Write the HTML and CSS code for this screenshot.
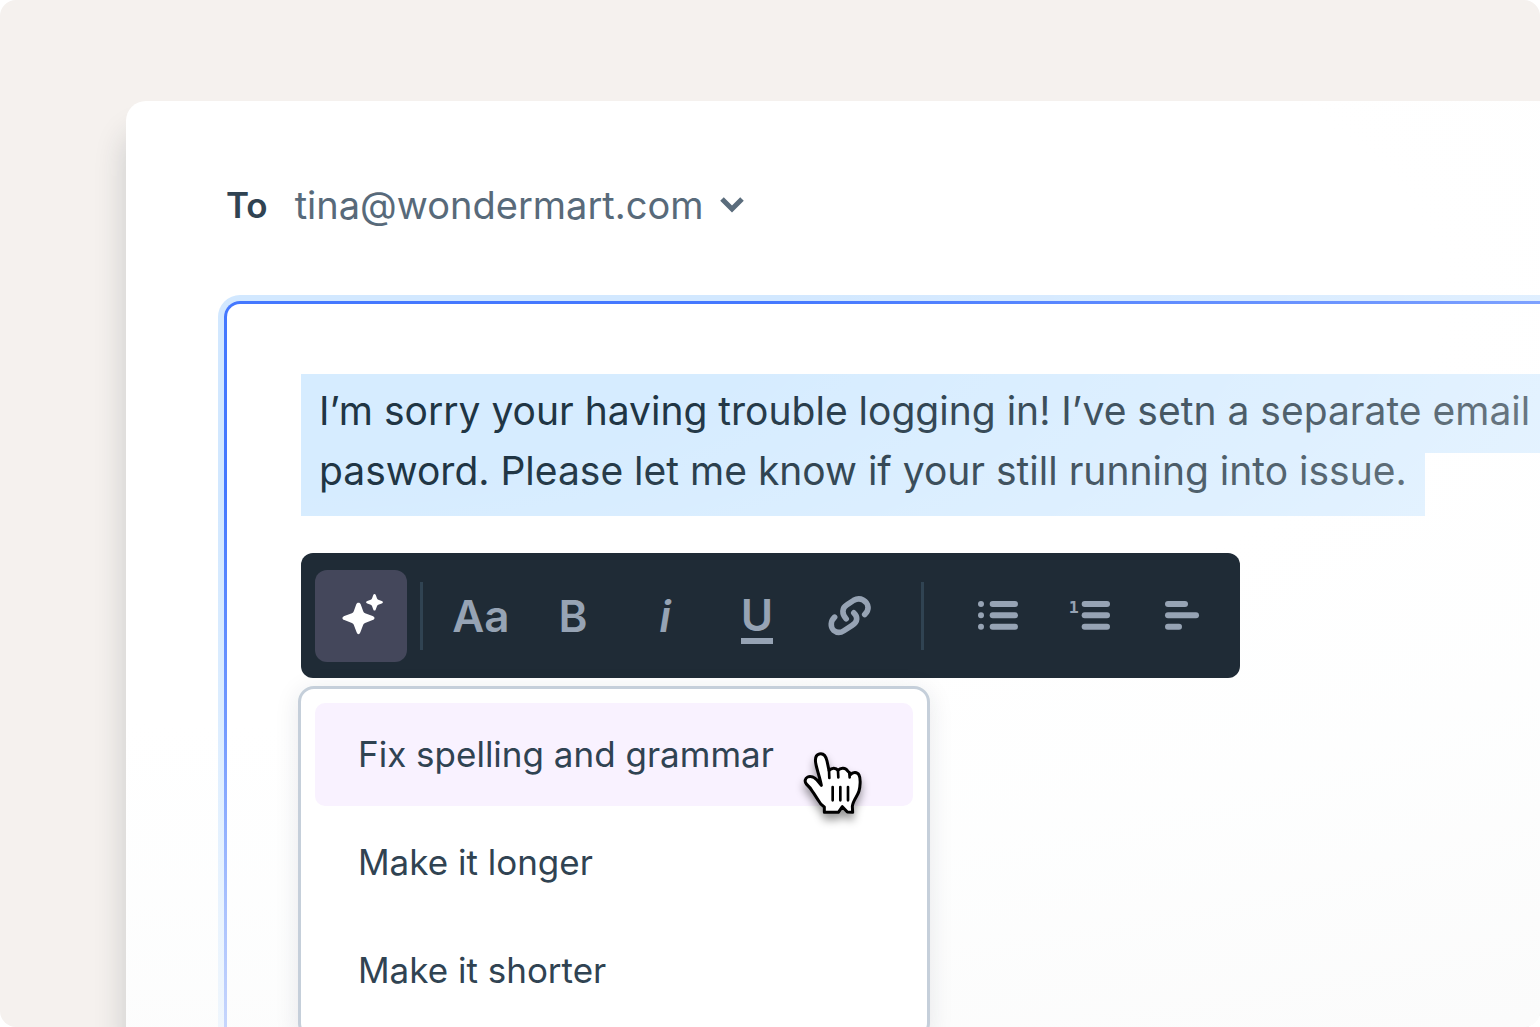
FILE: index.html
```html
<!DOCTYPE html>
<html lang="en">
<head>
    <meta charset="UTF-8">
    <meta name="viewport" content="width=device-width, initial-scale=1.0">
    <title>Reply</title>
    <link rel="stylesheet" href="styles.css">
</head>
<body>
    <main class="stage">
        <section class="composer">
            <div class="recipient">
                <span class="recipient-label" id="to-label">To</span>
                <button class="recipient-button" type="button" aria-labelledby="to-label to-address">
                    <span id="to-address">tina@wondermart.com</span>
                    <svg class="chevron" viewBox="0 0 26 18" aria-hidden="true">
                        <path d="M3 3l10 10L23 3"/>
                    </svg>
                </button>
            </div>

            <div class="editor">
                <div class="message" role="textbox" aria-multiline="true" aria-label="Message" contenteditable="true" spellcheck="false">
                    <mark>I’m sorry your having trouble logging in! I’ve setn a separate email</mark>
                    <mark class="last-line">pasword. Please let me know if your still running into issue.</mark>
                </div>

                <div class="toolbar" role="toolbar" aria-label="Formatting">
                    <button class="tool tool-ai" type="button" aria-label="AI assist">
                        <svg width="44" height="44" viewBox="-10 3 140 140" aria-hidden="true">
                            <path d="M52 31c4 0 6 2 7 5l8 22c1 3 3 5 6 6l24 9c8 3 8 10 0 13l-24 9c-3 1-5 3-6 6l-9 24c-3 8-9 8-12 0l-9-24c-1-3-3-5-6-6l-24-9c-8-3-8-10 0-13l24-9c3-1 5-3 6-6l8-22c1-3 3-5 7-5z"/>
                            <path d="M103 3c2 0 3 1 4 3l4 11c1 2 2 3 4 4l11 4c5 2 5 6 0 8l-11 4c-2 1-3 2-4 4l-4 11c-2 5-6 5-8 0l-4-11c-1-2-2-3-4-4l-11-4c-5-2-5-6 0-8l11-4c2-1 3-2 4-4l4-11c1-2 2-3 4-3z"/>
                        </svg>
                    </button>
                    <span class="divider divider-first"></span>
                    <button class="tool" type="button" aria-label="Text size">Aa</button>
                    <button class="tool" type="button" aria-label="Bold">B</button>
                    <button class="tool tool-italic" type="button" aria-label="Italic">i</button>
                    <button class="tool" type="button" aria-label="Underline"><span class="underlined">U</span></button>
                    <button class="tool" type="button" aria-label="Link">
                        <svg class="link-icon" width="47" height="43" viewBox="0 0 140 130" aria-hidden="true">
                            <path d="M60 75C46 60 47 42 62 33L83 19C102 8 124 20 126 40C127 50 122 56 116 62"/>
                            <path d="M25 70C12 82 12 100 22 110C33 119 44 117 53 111L78 95C96 84 95 68 83 57"/>
                        </svg>
                    </button>
                    <span class="divider"></span>
                    <button class="tool" type="button" aria-label="Bulleted list">
                        <svg width="40" height="29" viewBox="0 0 120 87" aria-hidden="true">
                            <circle cx="9" cy="9" r="9"/>
                            <circle cx="9" cy="43" r="9"/>
                            <circle cx="9" cy="77" r="9"/>
                            <rect x="35" y="0" width="85" height="18" rx="9"/>
                            <rect x="35" y="34" width="85" height="18" rx="9"/>
                            <rect x="35" y="68" width="85" height="18" rx="9"/>
                        </svg>
                    </button>
                    <button class="tool" type="button" aria-label="Numbered list">
                        <svg width="40" height="29" viewBox="0 0 120 87" aria-hidden="true">
                            <text class="list-number" x="-4" y="35">1</text>
                            <rect x="35" y="0" width="85" height="18" rx="9"/>
                            <rect x="35" y="34" width="85" height="18" rx="9"/>
                            <rect x="35" y="68" width="85" height="18" rx="9"/>
                        </svg>
                    </button>
                    <button class="tool" type="button" aria-label="Align left">
                        <svg width="34" height="29" viewBox="0 0 102 87" aria-hidden="true">
                            <rect x="0" y="0" width="69" height="18" rx="9"/>
                            <rect x="0" y="34" width="102" height="18" rx="9"/>
                            <rect x="0" y="68" width="51" height="18" rx="9"/>
                        </svg>
                    </button>

                    <div class="menu">
                        <button class="menu-item active" type="button">Fix spelling and grammar
                            <svg class="cursor" width="60" height="64" viewBox="0 0 180 192" aria-hidden="true">
                                <path class="hand" d="M61 181L61 165C52 159 47 153 43 145L28 122C22 112 15 103 7 96C1 89 3 79 11 75C20 71 32 76 39 84L52 100C48 78 40 57 36 38C32 20 34 9 46 6C59 3 66 14 69 27L75 55C84 46 96 47 102 55C110 46 125 47 131 57C136 60 138 64 139 68C147 59 160 60 165 69C171 80 168 107 165 117C161 132 147 145 145 163L146 181L130 180L115 164L103 181Z"/>
                                <path class="knuckles" d="M75 55L76 78M102 57L103 76M136 62L137 76M86 105V145M109 105V145M132 105V145"/>
                            </svg>
                        </button>
                        <button class="menu-item" type="button">Make it longer</button>
                        <button class="menu-item" type="button">Make it shorter</button>
                    </div>
                </div>
            </div>
        </section>
    </main>
</body>
</html>
```
FILE: styles.css
```css
* {
    box-sizing: border-box;
}

body {
    margin: 0;
    background: #ffffff;
    color: #304352;
    font-family: Inter, "Liberation Sans", sans-serif;
    overflow: hidden;
}

button {
    border: none;
    background: none;
    padding: 0;
    color: inherit;
    font: inherit;
    cursor: pointer;
}

.stage {
    display: flex;
    height: 100vh;
    padding: 101px 0 0 126px;
    border-radius: 16px;
    background: #f5f1ee;
    overflow: hidden;
}

.composer {
    position: relative;
    display: flex;
    flex-direction: column;
    flex: 1;
    min-width: 0;
    padding: 80px 0 0 98px;
    border-radius: 20px 0 0 0;
    background: #ffffff;
    box-shadow: 0 32px 32px rgba(31, 43, 54, 0.2);
}

/* fades the message out towards the bottom right, under the toolbar and menu */
.composer::after {
    content: "";
    position: absolute;
    inset: 0;
    border-radius: inherit;
    background: radial-gradient(ellipse 2690px 940px at 99px 200px, rgba(255, 255, 255, 0) 20%, rgba(255, 255, 255, 0.25) 45%, rgba(252, 253, 253, 0.56) 65%, #fafafa 100%);
    pointer-events: none;
}

.recipient {
    display: flex;
    align-items: center;
    gap: 27px;
    height: 48px;
    padding-left: 2px;
    font-size: 38px;
}

.recipient-label {
    font-size: 35px;
    font-weight: 600;
}

.recipient-button {
    display: flex;
    align-items: center;
    gap: 16px;
    color: #586a7a;
}

.chevron {
    width: 26px;
    height: 18px;
    fill: none;
    stroke: #586a7a;
    stroke-width: 5;
}

.editor {
    flex: 1;
    margin-top: 72px;
    padding: 70px 0 0 74px;
    border: 3px solid #4478ff;
    border-width: 3px 0 0 3px;
    border-radius: 16px 0 0 0;
    box-shadow: 0 0 0 6px #d2e8ff;
}

.message {
    color: #203544;
    font-size: 39px;
    line-height: 60px;
    white-space: nowrap;
    outline: none;
}

.message mark {
    display: block;
    width: fit-content;
    min-width: 100%;
    padding: 7px 18px 12px;
    background: #d6ecff;
    color: inherit;
}

.message .last-line {
    min-width: 0;
    padding: 0 18px 27px;
    line-height: 36px;
}

.toolbar {
    position: relative;
    z-index: 2;
    display: flex;
    align-items: center;
    width: fit-content;
    height: 125px;
    margin-top: 37px;
    padding: 0 12px 0 14px;
    border-radius: 12px;
    background: #1f2b36;
    color: #96a3b4;
}

.tool {
    display: flex;
    align-items: center;
    justify-content: center;
    width: 92px;
    height: 92px;
    border-radius: 12px;
    font-size: 44px;
    font-weight: 600;
}

.tool svg {
    fill: currentColor;
    overflow: visible;
}

.tool-ai {
    background: #44475b;
    color: #ffffff;
}

.tool-italic {
    font-style: italic;
}

.underlined {
    height: 56px;
    padding-top: 5px;
    border-bottom: 6px solid;
    line-height: 45px;
}

.tool .link-icon {
    fill: none;
    stroke: currentColor;
    stroke-width: 17;
    stroke-linecap: round;
}

.list-number {
    font: bold 50px "DejaVu Sans Mono", monospace;
}

.divider {
    width: 3px;
    height: 68px;
    margin: 0 28px 0 26px;
    background: #304352;
}

.divider-first {
    margin: 0 12px 0 13px;
}

.menu {
    position: absolute;
    top: calc(100% + 8px);
    left: -3px;
    display: flex;
    flex-direction: column;
    gap: 5px;
    width: 632px;
    padding: 14px;
    border: 3px solid #c5cfda;
    border-radius: 16px;
    background: #ffffff;
    box-shadow: 0 4px 24px rgba(31, 43, 54, 0.1);
}

.menu-item {
    position: relative;
    height: 103px;
    padding: 0 43px 2px;
    border-radius: 10px;
    color: #304352;
    font-size: 35px;
    text-align: left;
}

.menu-item.active {
    background: #f9f2ff;
}

.cursor {
    position: absolute;
    top: 49px;
    right: 49px;
    overflow: visible;
    filter: drop-shadow(0 6px 4px rgba(0, 0, 0, 0.4));
}

.hand {
    fill: #ffffff;
    stroke: #000000;
    stroke-width: 9;
    stroke-linejoin: round;
}

.knuckles {
    fill: none;
    stroke: #000000;
    stroke-width: 8;
    stroke-linecap: round;
}
```
